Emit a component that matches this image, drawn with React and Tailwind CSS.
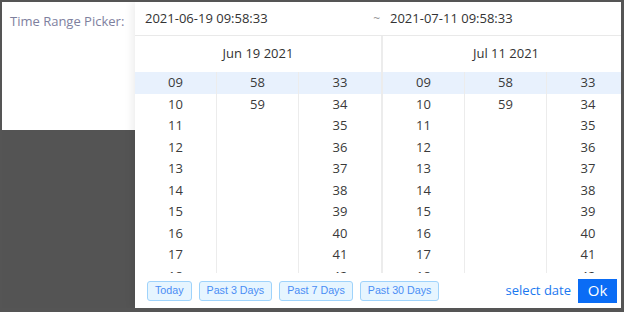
import React from 'react'

// Time range picker popup, open over a page with a label on the left

const HOURS = ['09', '10', '11', '12', '13', '14', '15', '16', '17', '18']
const MINUTES = ['58', '59']
const SECONDS = ['33', '34', '35', '36', '37', '38', '39', '40', '41', '42']
const PRESETS = ['Today', 'Past 3 Days', 'Past 7 Days', 'Past 30 Days']

function Column({ items, last }) {
  return (
    <div className={'w-[82px] shrink-0 flex flex-col ' + (last ? '' : 'border-r border-[#ececec]')}>
      {items.map((v, i) => (
        <div
          key={v}
          className={
            'h-[21.5px] shrink-0 flex items-center justify-center ' +
            (i === 0 ? 'bg-[#e8f1fd]' : '')
          }
        >
          {v}
        </div>
      ))}
    </div>
  )
}

function Panel({ title }) {
  return (
    <div className="w-[246px] shrink-0 flex flex-col">
      <div className="h-[36px] shrink-0 flex items-center justify-center text-[#333]">{title}</div>
      <div className="h-[201px] flex overflow-hidden text-[#3a3a3a]">
        <Column items={HOURS} />
        <Column items={MINUTES} />
        <Column items={SECONDS} last />
      </div>
    </div>
  )
}

export default function App() {
  return (
    <div
      className="w-[624px] h-[312px] flex overflow-hidden bg-[#545454] border-t-2 border-l-2 border-r-[3px] border-b-[4px] border-[#555555] text-[13px]"
      style={{ fontFamily: '"Open Sans", "Liberation Sans", sans-serif' }}
    >
      {/* page behind the popup */}
      <div className="w-[133px] shrink-0 flex flex-col">
        <div className="h-[128px] bg-white pl-[8px] pt-[10px] text-[13px] text-[#7e809e]">
          Time Range Picker:
        </div>
      </div>

      {/* popup */}
      <div className="relative z-10 flex-1 min-w-0 flex flex-col overflow-hidden bg-white shadow-[-3px_0_8px_rgba(0,0,0,0.07)]">
        <div className="h-[34px] shrink-0 flex items-center border-b border-[#e9e9e9] text-[#333]">
          <div className="w-[246px] shrink-0 flex items-center justify-between pl-[10px] pr-[1px]">
            <span>2021-06-19 09:58:33</span>
            <span className="text-[#999] text-[12px]">~</span>
          </div>
          <div className="pl-[9px]">2021-07-11 09:58:33</div>
        </div>

        <div className="flex shrink-0">
          <Panel title="Jun 19 2021" />
          <div className="w-[2px] shrink-0 bg-[#ececec]" />
          <Panel title="Jul 11 2021" />
        </div>

        <div className="flex-1 flex items-center justify-between pl-[12px] pr-[4px]">
          <div className="flex items-center gap-[7px]">
            {PRESETS.map((p) => (
              <button
                key={p}
                className="h-[20px] px-[7px] rounded-[3px] border border-[#9fd3fb] bg-[#e6f5ff] text-[10.7px] text-[#4a8df5] leading-none"
                style={{ fontFamily: '"Liberation Sans", Arial, sans-serif' }}
              >
                {p}
              </button>
            ))}
          </div>
          <div className="flex items-center gap-[7px]">
            <span className="text-[#1a78f0]">select date</span>
            <button className="w-[39px] h-[24px] bg-[#0a6cf5] text-white text-[15px] leading-none">Ok</button>
          </div>
        </div>
      </div>
    </div>
  )
}
